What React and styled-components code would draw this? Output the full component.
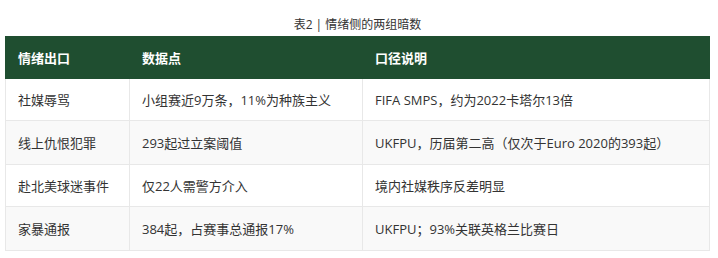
import React from 'react'
import styled, { createGlobalStyle } from 'styled-components'

const GlobalStyle = createGlobalStyle`
  html, body {
    margin: 0;
    padding: 0;
    background: #ffffff;
  }
  body {
    font-family: "Open Sans", "Noto Sans CJK SC", sans-serif;
    color: #333333;
  }
`

const Wrapper = styled.div`
  width: 718px;
  height: 258px;
  box-sizing: border-box;
  padding: 14px 8px 0 5px;
`

const Caption = styled.div`
  text-align: center;
  font-size: 12px;
  line-height: 20px;
  height: 22px;
  padding-top: 1px;
  box-sizing: border-box;
  color: #333333;
`

const Table = styled.table`
  width: 100%;
  border-collapse: collapse;
  table-layout: fixed;
  font-size: 13px;
`

const HeadCell = styled.th`
  background: #1f4e30;
  color: #ffffff;
  font-weight: 700;
  text-align: left;
  height: 42px;
  padding: 0 12px;
  box-sizing: border-box;
  border: 1px solid #1f4e30;
  border-left: 1px solid ${({ $first }) => ($first ? '#1f4e30' : '#8aa192')};
`

const Row = styled.tr`
  background: ${({ $striped }) => ($striped ? '#f9f9f9' : '#ffffff')};
`

const Cell = styled.td`
  height: ${({ $tall }) => ($tall ? 44 : 42)}px;
  padding: 0 12px;
  box-sizing: border-box;
  border: 1px solid #e8e8e8;
  color: #333333;
  white-space: nowrap;
`

const columns = [
  { label: '情绪出口', width: 124 },
  { label: '数据点', width: 233 },
  { label: '口径说明' },
]

const rows = [
  ['社媒辱骂', '小组赛近9万条，11%为种族主义', 'FIFA SMPS，约为2022卡塔尔13倍'],
  ['线上仇恨犯罪', '293起过立案阈值', 'UKFPU，历届第二高（仅次于Euro 2020的393起）'],
  ['赴北美球迷事件', '仅22人需警方介入', '境内社媒秩序反差明显'],
  ['家暴通报', '384起，占赛事总通报17%', 'UKFPU；93%关联英格兰比赛日'],
]

const App = () => (
  <>
    <GlobalStyle />
    <Wrapper>
      <Caption>表2 | 情绪侧的两组暗数</Caption>
      <Table>
        <colgroup>
          {columns.map((c) => (
            <col key={c.label} style={c.width ? { width: c.width } : undefined} />
          ))}
        </colgroup>
        <thead>
          <tr>
            {columns.map((c, i) => (
              <HeadCell key={c.label} $first={i === 0}>
                {c.label}
              </HeadCell>
            ))}
          </tr>
        </thead>
        <tbody>
          {rows.map((r, i) => (
            <Row key={r[0]} $striped={i % 2 === 1}>
              {r.map((text, j) => (
                <Cell key={j} $tall={i % 2 === 1}>
                  {text}
                </Cell>
              ))}
            </Row>
          ))}
        </tbody>
      </Table>
    </Wrapper>
  </>
)

export default App
